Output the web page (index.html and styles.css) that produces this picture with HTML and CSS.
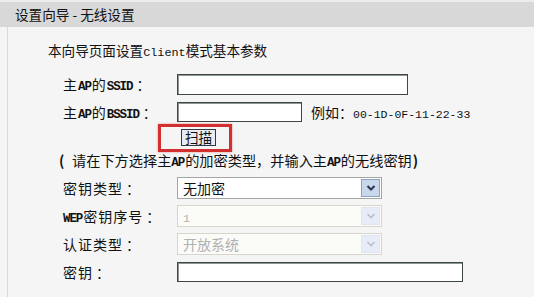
FILE: index.html
```html
<!DOCTYPE html>
<html lang="zh-CN">
<head>
<meta charset="utf-8">
<title>设置向导 - 无线设置</title>
<link rel="stylesheet" href="styles.css">
</head>
<body>
<div class="header">设置向导 - 无线设置</div>
<div class="panel">
  <div class="intro">本向导页面设置<span class="en">Client</span>模式基本参数</div>
  <div class="form">
    <div class="row">
      <div class="label">主<span class="en b">AP</span>的<span class="en b">SSID</span><span class="colon">：</span></div>
      <div class="field"><div class="input w-ssid"></div></div>
    </div>
    <div class="row">
      <div class="label">主<span class="en b">AP</span>的<span class="en b">BSSID</span><span class="colon">：</span></div>
      <div class="field"><div class="input w-bssid"></div><span class="example">例如<span class="colon">：</span><span class="en">00-1D-0F-11-22-33</span></span></div>
    </div>
    <div class="row row-btn">
      <div class="label"></div>
      <div class="field"><div class="scan-wrap"><button class="scan">扫描</button><span class="highlight"></span></div></div>
    </div>
    <div class="note"><span class="paren">(</span>请在下方选择主<span class="en b">AP</span>的加密类型，并输入主<span class="en b">AP</span>的无线密钥<span class="paren-close">)</span></div>
    <div class="row">
      <div class="label">密钥类型<span class="colon">：</span></div>
      <div class="field">
        <div class="select"><span class="value">无加密</span><span class="arrow"><svg width="10" height="8" viewBox="0 0 10 8"><path d="M1.5 2 L5 5.5 L8.5 2" fill="none" stroke="#2a3550" stroke-width="2"/></svg></span></div>
      </div>
    </div>
    <div class="row">
      <div class="label"><span class="en b">WEP</span>密钥序号<span class="colon">：</span></div>
      <div class="field">
        <div class="select disabled"><span class="value"><span class="en">1</span></span><span class="arrow"><svg width="10" height="8" viewBox="0 0 10 8"><path d="M1.5 2 L5 5.5 L8.5 2" fill="none" stroke="#b8bfcc" stroke-width="1.6"/></svg></span></div>
      </div>
    </div>
    <div class="row">
      <div class="label">认证类型<span class="colon">：</span></div>
      <div class="field">
        <div class="select disabled"><span class="value">开放系统</span><span class="arrow"><svg width="10" height="8" viewBox="0 0 10 8"><path d="M1.5 2 L5 5.5 L8.5 2" fill="none" stroke="#b8bfcc" stroke-width="1.6"/></svg></span></div>
      </div>
    </div>
    <div class="row">
      <div class="label">密钥<span class="colon">：</span></div>
      <div class="field"><div class="input w-key"></div></div>
    </div>
  </div>
</div>
</body>
</html>
```
FILE: styles.css
```css
html, body {
  margin: 0;
  padding: 0;
  background: #f5f5f5;
  height: 100%;
  overflow: hidden;
}
body {
  font-family: "Noto Sans CJK SC", "Noto Sans", sans-serif;
  font-size: 13.6px;
  color: #111;
}
.en {
  font-family: "Liberation Mono", monospace;
  font-size: 11.8px;
  letter-spacing: 0;
}
.en.b {
  font-weight: bold;
  font-size: 12.5px;
  letter-spacing: -1.1px;
  margin-right: 1px;
}
.colon {
  font-family: "Noto Sans CJK TC", "Noto Sans CJK SC", sans-serif;
  letter-spacing: 0;
}
.label .colon {
  margin-left: 3px;
}
.header {
  box-sizing: border-box;
  height: 27px;
  border-top: 2px solid #ececec;
  background: #d8d8d8;
  padding-left: 15px;
  line-height: 24px;
  white-space: pre;
}
.panel {
  box-sizing: border-box;
  margin-left: 7px;
  border-left: 1px solid #e6dcae;
  height: 270px;
  padding-top: 12px;
}
.intro {
  height: 22px;
  line-height: 22px;
  padding-left: 40px;
  margin-bottom: 9px;
}
.form {
  display: flex;
  flex-direction: column;
}
.row {
  display: flex;
  align-items: center;
  height: 28px;
}
.row-btn {
  height: 22px;
}
.label {
  box-sizing: border-box;
  width: 169px;
  padding-left: 55px;
  white-space: nowrap;
  font-size: 14px;
  letter-spacing: 1px;
}
.field {
  display: flex;
  align-items: center;
}
.input {
  box-sizing: border-box;
  height: 20px;
  background: #fff;
  border: 1px solid #3e4646;
  box-shadow: inset 1px 1px 0 #8c9494;
}
.w-ssid { width: 231px; height: 21px; }
.w-bssid { width: 125px; }
.w-key { width: 286px; }
.example {
  margin-left: 9px;
  white-space: nowrap;
  font-size: 14px;
}
.example .en {
  font-size: 11.5px;
}
.scan-wrap {
  position: relative;
  margin-left: 4px;
  display: flex;
}
.scan {
  box-sizing: border-box;
  width: 35px;
  height: 17px;
  padding: 0;
  margin: 0;
  font-family: inherit;
  font-size: 13.6px;
  line-height: 15px;
  color: #111;
  background: #e9edf3;
  border: 1px solid #2f3a46;
}
.highlight {
  position: absolute;
  left: -23px;
  top: -5px;
  width: 74px;
  height: 28px;
  box-sizing: border-box;
  border: 3px solid #d2302f;
  box-shadow: 0 0 2px rgba(200, 40, 40, 0.5);
}
.note {
  height: 24px;
  line-height: 24px;
  padding-left: 50px;
  margin-bottom: 2px;
  white-space: nowrap;
  font-size: 14.2px;
}
.paren {
  display: inline-block;
  width: 14px;
  padding-left: 1px;
  box-sizing: border-box;
  font-weight: bold;
}
.paren-close {
  font-weight: bold;
  margin-left: 1px;
}
.select {
  box-sizing: border-box;
  width: 205px;
  height: 22px;
  display: flex;
  align-items: stretch;
  background: #fff;
  border: 1px solid #a5a5a5;
  font-size: 14px;
}
.select .value {
  flex: 1;
  padding-left: 5px;
  line-height: 20px;
}
.select .arrow {
  box-sizing: border-box;
  width: 19px;
  margin: 1px;
  display: flex;
  align-items: center;
  justify-content: center;
  background: #c9d7ec;
  border: 1px solid #8ea2c6;
}
.select.disabled {
  background: #fbfbf7;
  border-color: #d6d6cc;
  color: #b0b0b0;
}
.select.disabled .arrow {
  background: #e6edf8;
  border-color: #e0e6f0;
}
```
